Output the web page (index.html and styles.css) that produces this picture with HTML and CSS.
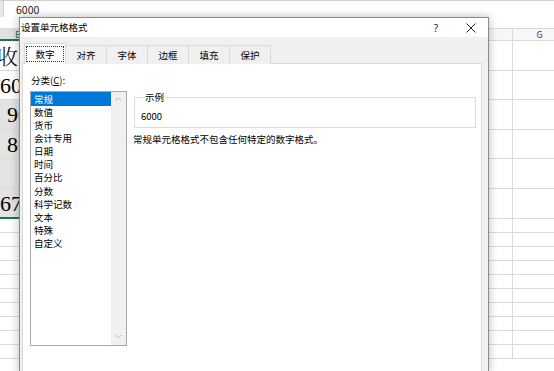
FILE: index.html
```html
<!DOCTYPE html>
<html lang="zh-CN">
<head>
  <meta charset="UTF-8">
  <title>设置单元格格式</title>
  <link rel="stylesheet" href="styles.css">
</head>
<body>
  <!-- ========== 工作表（背景） ========== -->
  <div class="sheet">
    <div class="fbar">
      <div class="fbar-side"></div>
      <div class="fbar-input">6000</div>
    </div>

    <div class="row head">
      <div class="cell col-e sel-head">E</div>
      <div class="cell col-f"></div>
      <div class="cell col-g">G</div>
      <div class="cell col-h"></div>
    </div>

    <div class="row tall">
      <div class="cell col-e big txt">收入</div>
      <div class="cell col-f"></div><div class="cell col-g"></div><div class="cell col-h"></div>
    </div>
    <div class="row tall">
      <div class="cell col-e big num">6000</div>
      <div class="cell col-f"></div><div class="cell col-g"></div><div class="cell col-h"></div>
    </div>
    <div class="row tall">
      <div class="cell col-e big num shade">900</div>
      <div class="cell col-f"></div><div class="cell col-g"></div><div class="cell col-h"></div>
    </div>
    <div class="row tall">
      <div class="cell col-e big num shade">800</div>
      <div class="cell col-f"></div><div class="cell col-g"></div><div class="cell col-h"></div>
    </div>
    <div class="row tall">
      <div class="cell col-e big num shade"></div>
      <div class="cell col-f"></div><div class="cell col-g"></div><div class="cell col-h"></div>
    </div>
    <div class="row tall last-sel">
      <div class="cell col-e big num shade">6700</div>
      <div class="cell col-f"></div><div class="cell col-g"></div><div class="cell col-h"></div>
    </div>

    <div class="row"><div class="cell col-e"></div><div class="cell col-f"></div><div class="cell col-g"></div><div class="cell col-h"></div></div>
    <div class="row"><div class="cell col-e"></div><div class="cell col-f"></div><div class="cell col-g"></div><div class="cell col-h"></div></div>
    <div class="row"><div class="cell col-e"></div><div class="cell col-f"></div><div class="cell col-g"></div><div class="cell col-h"></div></div>
    <div class="row"><div class="cell col-e"></div><div class="cell col-f"></div><div class="cell col-g"></div><div class="cell col-h"></div></div>
    <div class="row"><div class="cell col-e"></div><div class="cell col-f"></div><div class="cell col-g"></div><div class="cell col-h"></div></div>
    <div class="row"><div class="cell col-e"></div><div class="cell col-f"></div><div class="cell col-g"></div><div class="cell col-h"></div></div>
    <div class="row"><div class="cell col-e"></div><div class="cell col-f"></div><div class="cell col-g"></div><div class="cell col-h"></div></div>
    <div class="row"><div class="cell col-e"></div><div class="cell col-f"></div><div class="cell col-g"></div><div class="cell col-h"></div></div>
    <div class="row"><div class="cell col-e"></div><div class="cell col-f"></div><div class="cell col-g"></div><div class="cell col-h"></div></div>
    <div class="row"><div class="cell col-e"></div><div class="cell col-f"></div><div class="cell col-g"></div><div class="cell col-h"></div></div>
  </div>

  <!-- ========== 对话框 ========== -->
  <div class="dialog">
    <div class="titlebar">
      <span class="title">设置单元格格式</span>
      <span class="tb-btn help">?</span>
      <span class="tb-btn close">
        <svg width="10" height="10" viewBox="0 0 10 10"><path d="M0.5 0.5 L9.5 9.5 M9.5 0.5 L0.5 9.5" stroke="#222" stroke-width="1" fill="none"/></svg>
      </span>
    </div>

    <div class="dlg-body">
      <div class="tabs">
        <div class="tab active"><span class="focus">数字</span></div>
        <div class="tab">对齐</div>
        <div class="tab">字体</div>
        <div class="tab">边框</div>
        <div class="tab">填充</div>
        <div class="tab">保护</div>
      </div>

      <div class="panel">
        <div class="cat">
          <div class="cat-label">分类(<u>C</u>):</div>
          <div class="listbox">
            <ul class="items">
              <li class="selected">常规</li>
              <li>数值</li>
              <li>货币</li>
              <li>会计专用</li>
              <li>日期</li>
              <li>时间</li>
              <li>百分比</li>
              <li>分数</li>
              <li>科学记数</li>
              <li>文本</li>
              <li>特殊</li>
              <li>自定义</li>
            </ul>
            <div class="scrollbar">
              <svg width="7" height="5" viewBox="0 0 7 5"><path d="M0.5 4 L3.5 1 L6.5 4" stroke="#b4b4b4" fill="none"/></svg>
              <svg width="7" height="5" viewBox="0 0 7 5"><path d="M0.5 1 L3.5 4 L6.5 1" stroke="#b4b4b4" fill="none"/></svg>
            </div>
          </div>
        </div>

        <div class="detail">
          <fieldset class="sample">
            <legend>示例</legend>
            <div class="sample-val">6000</div>
          </fieldset>
          <p class="desc">常规单元格格式不包含任何特定的数字格式。</p>
        </div>
      </div>
    </div>
  </div>
</body>
</html>
```

FILE: styles.css
```css
/* ---------- 基础 ---------- */
* {
  box-sizing: border-box;
  margin: 0;
  padding: 0;
}
html, body {
  height: 371px;
  overflow: hidden;
}
body {
  width: 554px;
  position: relative;
  background: #fff;
  font-family: "Noto Sans CJK SC", "Noto Sans", sans-serif;
  color: #000;
}

/* ---------- 工作表 ---------- */
.sheet {
  display: flex;
  flex-direction: column;
  height: 371px;
  overflow: hidden;
}
.fbar {
  flex: none;
  display: flex;
  height: 17px;
  border-top: 1px solid #d0d0d0;
  margin-bottom: 11px;
}
.fbar-side {
  width: 4px;
  background: #e9e9e9;
  border-right: 1px solid #d0d0d0;
}
.fbar-input {
  padding-left: 12px;
  font-size: 10.5px;
  line-height: 17px;
  color: #222;
}
.row {
  flex: none;
  display: flex;
  height: 14px;
}
.row.tall {
  height: 29.6px;
}
.row.head {
  height: 13px;
  border-top: 1px solid #dadada;
  background: #f7f7f7;
}
.cell {
  flex: none;
  border-right: 1px solid #dadada;
  border-bottom: 1px solid #dadada;
  overflow: hidden;
  white-space: nowrap;
}
.col-e { width: 43px; }
.col-f { width: 470px; }
.col-g { width: 54px; }
.col-h { flex: 1; border-right: none; }

.head .cell {
  font-size: 9px;
  line-height: 11px;
  text-align: center;
  color: #444;
}
.head .sel-head {
  background: #e1e1e1;
  color: #217346;
  border-bottom: 2px solid #217346;
  text-align: left;
  padding-left: 15px;
}
.big {
  font-family: "Liberation Serif", serif;
  font-size: 22px;
  line-height: 29px;
  overflow: visible;
}
.big.txt {
  text-indent: -3px;
  font-family: "Noto Serif CJK SC", "Noto Sans CJK SC", serif;
  font-weight: 300;
  font-size: 21px;
}
.big.num {
  text-align: right;
  padding-right: 2px;
}
.shade {
  background: #e3e3e3;
}
.last-sel .col-e {
  border-bottom: 2px solid #217346;
}

/* ---------- 对话框 ---------- */
.dialog {
  position: absolute;
  left: 19px;
  top: 17px;
  width: 470px;
  height: 356px;
  border: 1px solid #8a8a8a;
  background: #f0f0f0;
  box-shadow: 0 0 9px rgba(0, 0, 0, 0.28);
  font-size: 9.5px;
  overflow: hidden;
}
.titlebar {
  height: 19px;
  background: #fff;
  display: flex;
  align-items: center;
  padding-left: 1px;
}
.title {
  flex: 1;
  line-height: 19px;
}
.tb-btn {
  width: 34px;
  height: 19px;
  display: flex;
  align-items: center;
  justify-content: center;
}
.help {
  font-family: "Noto Sans", sans-serif;
  font-size: 10px;
  color: #222;
}
.close {
  width: 35px;
}

/* ---------- 标签页 ---------- */
.tabs {
  display: flex;
  align-items: flex-end;
  height: 27px;
  padding: 6px 0 0 4px;
  margin-bottom: -1px;
  position: relative;
  z-index: 1;
}
.tab {
  width: 42px;
  height: 19px;
  border: 1px solid #d9d9d9;
  border-bottom: none;
  margin-left: -1px;
  display: flex;
  align-items: center;
  justify-content: center;
  background: #f0f0f0;
}
.tab.active {
  width: 42px;
  height: 21px;
  margin-left: 0;
  background: #fff;
  border-color: #d9d9d9;
}
.focus {
  outline: 1px dotted #333;
  padding: 1px 8px;
  line-height: 12px;
}

/* ---------- 面板 ---------- */
.panel {
  margin: 0 6px 0 2px;
  height: 320px;
  background: #fff;
  border: 1px solid #d9d9d9;
  padding: 10px 5px 0 7px;
  display: flex;
  gap: 6px;
}
.cat-label {
  padding-left: 1px;
  line-height: 13px;
  margin-bottom: 4px;
}
.cat-label u {
  text-underline-offset: 1px;
}
.listbox {
  width: 97px;
  height: 255px;
  border: 1px solid #a7a9ae;
  display: flex;
}
.items {
  list-style: none;
  width: 80px;
}
.items li {
  height: 13.1px;
  line-height: 13.1px;
  padding-left: 3px;
}
.items li.selected {
  height: 14px;
  line-height: 14px;
  background: #0078d7;
  color: #fff;
}
.scrollbar {
  flex: 1;
  background: #f0f0f0;
  display: flex;
  flex-direction: column;
  align-items: center;
  justify-content: space-between;
  padding: 5px 0 6px;
}

/* ---------- 右侧详情 ---------- */
.detail {
  flex: 1;
  margin-top: 17px;
}
.sample {
  border: 1px solid #dcdcdc;
  padding: 6px 6px 4px;
  margin-left: 1px;
  min-width: 0;
}
.sample legend {
  margin-left: 3px;
  padding: 0 1px;
  line-height: 13px;
}
.sample-val {
  line-height: 13px;
}
.desc {
  margin-top: 5px;
  line-height: 13px;
}
```
